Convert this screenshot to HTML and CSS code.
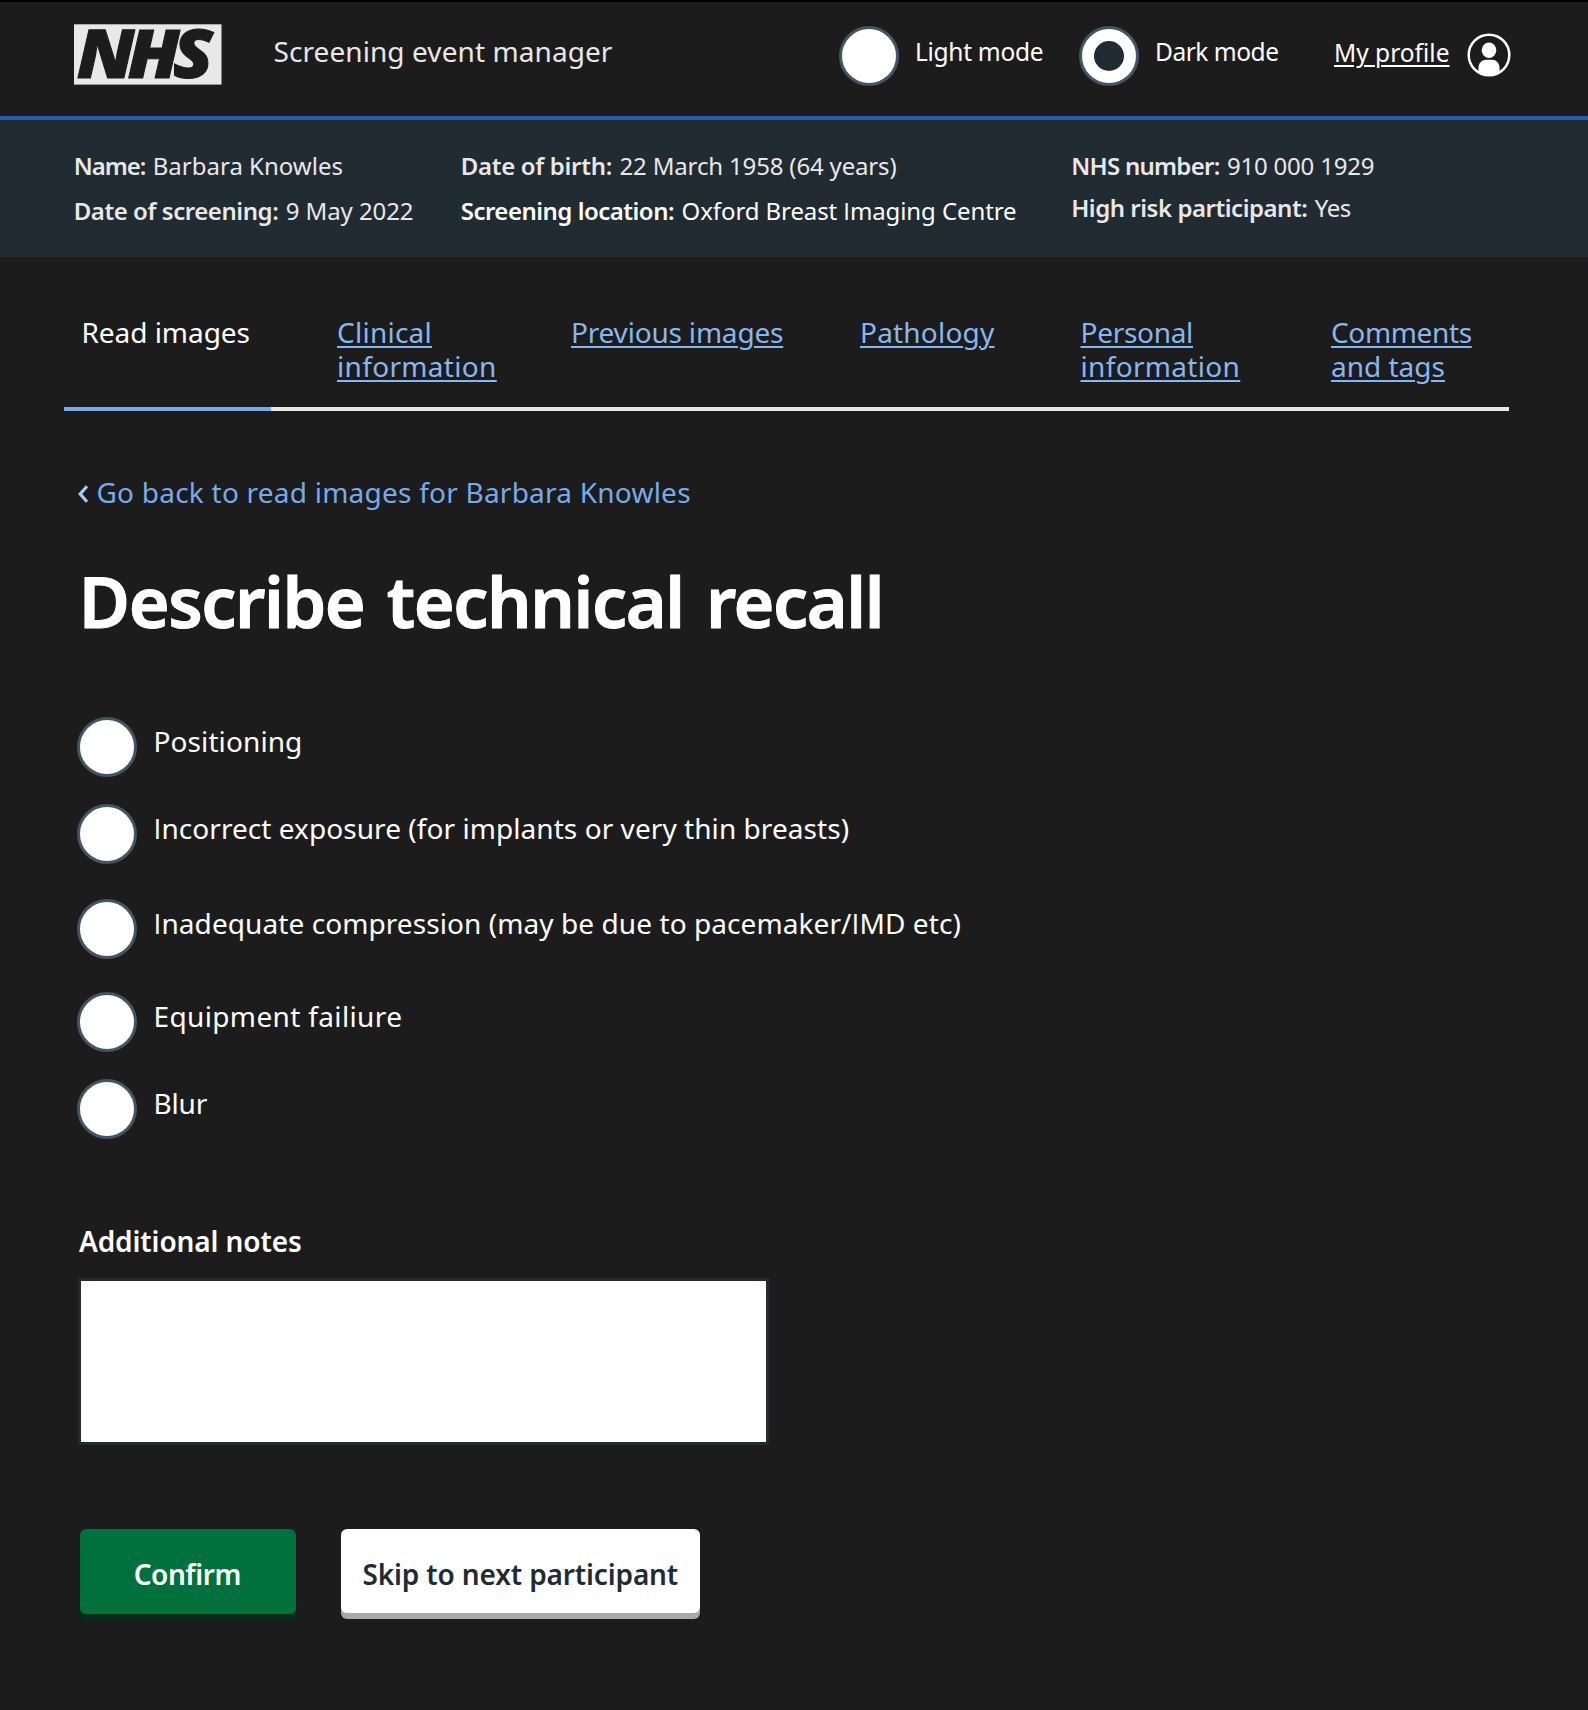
FILE: index.html
```html
<!DOCTYPE html>
<html lang="en">
<head>
<meta charset="utf-8">
<title>Describe technical recall</title>
<link rel="stylesheet" href="styles.css">
</head>
<body>
<header class="header">
  <svg class="logo" width="148" height="101" viewBox="0 -20 148 101" role="img" aria-label="NHS">
    <rect y="0.300" width="147.500" height="60.300" fill="#e8e8e8"/>
    <text class="logo-text" y="53.500" transform="scale(1.100 1)"><tspan x="2.600">N</tspan><tspan x="48.600">H</tspan><tspan x="90">S</tspan></text>
  </svg>
  <div class="service">Screening event manager</div>
  <div class="modes">
    <label class="mode"><span class="radio"></span><span class="mode-label mode-light">Light mode</span></label>
    <label class="mode"><span class="radio radio-on"></span><span class="mode-label mode-dark">Dark mode</span></label>
  </div>
  <a class="profile" href="#">My profile</a>
  <svg class="avatar" width="44" height="44" viewBox="0 0 44 44" aria-hidden="true">
    <circle cx="22" cy="22" r="20.300" fill="none" stroke="#fff" stroke-width="2.500"/>
    <ellipse cx="22" cy="17.300" rx="7.300" ry="7.800" fill="#fff"/>
    <path d="M11.400 38.500V35.500C11.400 30 15.200 26.800 19 26.800H25C28.800 26.800 32.600 30 32.600 35.500V38.500C29.500 41 26 42.400 22 42.400S14.500 41 11.400 38.500Z" fill="#fff"/>
  </svg>
</header>

<dl class="patient">
  <div class="patient-col">
    <div class="field"><dt class="k-name">Name:</dt><dd>Barbara Knowles</dd></div>
    <div class="field"><dt class="k-screened">Date of screening:</dt><dd class="v-screened">9 May 2022</dd></div>
  </div>
  <div class="patient-col">
    <div class="field"><dt class="k-dob">Date of birth:</dt><dd class="v-dob">22 March 1958 (64 years)</dd></div>
    <div class="field field-bright"><dt class="k-place">Screening location:</dt><dd class="v-place">Oxford Breast <span class="cap-i">I</span>maging Centre</dd></div>
  </div>
  <div class="patient-col patient-col-tight">
    <div class="field"><dt class="k-number">NHS number:</dt><dd class="v-number">910 000 1929</dd></div>
    <div class="field"><dt class="k-risk">High risk participant:</dt><dd class="v-risk">Yes</dd></div>
  </div>
</dl>

<nav class="tabs">
  <div class="tab tab-current">Read images</div>
  <div class="tab"><a href="#"><span class="t-clinical">Clinical</span><br><span class="t-wide">information</span></a></div>
  <div class="tab"><a class="t-previous" href="#">Previous images</a></div>
  <div class="tab"><a class="t-pathology" href="#">Pathology</a></div>
  <div class="tab"><a href="#"><span class="t-personal">Personal</span><br><span class="t-wide">information</span></a></div>
  <div class="tab"><a href="#"><span class="t-comments">Comments</span><br>and tags</a></div>
</nav>

<main class="main">
  <a class="back" href="#">
    <svg class="chevron" width="12" height="18" viewBox="0 0 12 18" aria-hidden="true"><path d="M10 1.300L3.200 9L10 16.700" fill="none" stroke="#a3cbf5" stroke-width="3.200"/></svg>
    <span>Go back to read images for Barbara Knowles</span>
  </a>
  <h1 class="title">Describe technical recall</h1>

  <div class="options">
    <label class="option"><span class="radio"></span><span class="o-positioning">Positioning</span></label>
    <label class="option option-2"><span class="radio"></span><span><span class="cap-i">I</span>ncorrect exposure (for implants or very thin breasts)</span></label>
    <label class="option option-3"><span class="radio"></span><span><span class="cap-i">I</span>nadequate compression (may be due to pacemaker/<span class="cap-i">I</span>MD etc)</span></label>
    <label class="option option-4"><span class="radio"></span><span class="o-equipment">Equipment failiure</span></label>
    <label class="option option-5"><span class="radio"></span><span class="o-blur">Blur</span></label>
  </div>

  <label class="notes-label" for="notes">Additional notes</label>
  <textarea class="notes" id="notes"></textarea>

  <div class="actions">
    <button class="button button-confirm">Confirm</button>
    <button class="button button-skip">Skip to next participant</button>
  </div>
</main>
</body>
</html>
```
FILE: styles.css
```css
* { box-sizing: border-box; }

body {
  margin: 0;
  min-height: 1710px;
  background: #1c1c1c;
  color: #fff;
  font: 400 28px/36px "Noto Sans", "Open Sans", sans-serif;
}

a { color: inherit; text-underline-offset: 3px; text-decoration-thickness: 1.5px; }

/* Sans capital I without bars */
.cap-i { font-family: "Open Sans", sans-serif; }

/* Header */
.header {
  display: flex;
  align-items: flex-start;
  height: 120px;
  padding-left: 74px;
  border-top: 2px solid #000;
  border-bottom: 4px solid #255db0;
}
.logo { flex: none; margin-top: 2px; }
.logo-text {
  font: italic 800 66.500px "Open Sans", sans-serif;
  fill: #1c1c1c;
  stroke: #1c1c1c;
  stroke-width: 1px;
}
.service { width: 565px; margin: 31px 0 0 51.500px; color: #e8e8e8; letter-spacing: .08px; white-space: nowrap; }
.modes { display: flex; margin-top: 24px; }
.mode { display: flex; width: 240px; }
.mode-label { margin: 8px 0 0 16.500px; font-size: 24.500px; line-height: 36px; white-space: nowrap; }
.mode-light { letter-spacing: -.3px; }
.mode-dark { letter-spacing: -.48px; }
.radio {
  flex: none;
  width: 60px;
  height: 60px;
  border: 3px solid #425563;
  border-radius: 50%;
  background: #fff;
}
.radio-on { display: grid; place-items: center; }
.radio-on::before { content: ""; width: 30px; height: 30px; border-radius: 50%; background: #212b32; }
.profile { width: 132.500px; margin: 33px 0 0 15.500px; font-size: 24.500px; line-height: 36px; white-space: nowrap; }
.avatar { flex: none; margin-top: 30.500px; }

/* Patient banner */
.patient {
  display: grid;
  grid-template-columns: 387px 610.500px 1fr;
  height: 137px;
  margin: 0;
  padding: 29.500px 0 0 73.700px;
  background: #212b32;
  color: #e8e8e8;
  font-size: 24px;
  line-height: 32px;
}
.patient-col { display: flex; flex-direction: column; gap: 13px; }
.patient-col-tight { gap: 10px; }
.field { display: flex; gap: 7.500px; white-space: nowrap; }
.field-bright { color: #fff; }
dt { font-weight: 600; }
dd { margin: 0; }
.k-name { letter-spacing: -1.040px; }
.k-screened { letter-spacing: -.44px; }
.v-screened { letter-spacing: -.1px; }
.k-dob { letter-spacing: -.3px; }
.v-dob { letter-spacing: -.16px; }
.k-place { letter-spacing: -.5px; }
.v-place { letter-spacing: -.1px; }
.k-number { letter-spacing: -.73px; }
.v-number { letter-spacing: -.22px; }
.k-risk { letter-spacing: -.47px; }
.v-risk { letter-spacing: -.46px; }

/* Tabs */
.tabs {
  position: relative;
  display: grid;
  grid-template-columns: 273px 234px 289px 220.500px 250.500px 1fr;
  width: 1445px;
  height: 154px;
  margin-left: 64px;
  padding-top: 58px;
  border-bottom: 4px solid #e8e8e8;
  line-height: 34px;
  white-space: nowrap;
}
.tab { color: #87b7ed; }
.tab-current { padding-left: 17.500px; color: #fff; letter-spacing: -.05px; }
.tab-current::after {
  content: "";
  position: absolute;
  left: 0;
  bottom: -4px;
  width: 207px;
  height: 4px;
  background: #76abea;
}
.t-clinical { letter-spacing: .25px; }
.t-wide { letter-spacing: .33px; }
.t-previous { letter-spacing: -.19px; }
.t-pathology { letter-spacing: .2px; }
.t-personal { letter-spacing: -.3px; }
.t-comments { letter-spacing: -.36px; }

/* Content */
.main { display: flex; flex-direction: column; align-items: flex-start; padding: 63px 0 0 77px; }
.back { display: flex; align-items: center; gap: 7.500px; color: #76abea; letter-spacing: .23px; text-decoration: none; }
.chevron { margin-top: 4px; }
.title {
  margin: 51px 0 0 1.800px;
  font-size: 70px;
  font-weight: 600;
  line-height: 80px;
  letter-spacing: -1.400px;
  word-spacing: 5.500px;
  -webkit-text-stroke: 1px #fff;
}

.options { margin-top: 76px; }
.option { display: flex; gap: 16.500px; height: 60px; white-space: nowrap; }
.option > :last-child { margin-top: 6px; }
.option-2 { margin-top: 27px; letter-spacing: .06px; }
.option-3 { margin-top: 35px; letter-spacing: .08px; }
.option-4 { margin-top: 33px; }
.option-5 { margin-top: 27px; }
.o-positioning { letter-spacing: .1px; }
.o-equipment { letter-spacing: .36px; }
.o-blur { letter-spacing: -.2px; }

.notes-label { margin: 84px 0 0 2px; font-weight: 600; letter-spacing: -.11px; }
.notes {
  display: block;
  width: 691px;
  height: 167px;
  margin: 19px 0 0 1px;
  border: 3px solid #212b32;
  background: #fff;
  resize: none;
}

.actions { display: flex; gap: 45px; margin: 84px 0 0 3px; }
.button {
  height: 85px;
  padding: 4px 0 0;
  border: 0;
  border-radius: 6px;
  font: 600 28px/36px "Noto Sans", sans-serif;
}
.button-confirm { width: 216px; padding-right: 1.500px; background: #00703c; box-shadow: 0 6px #002f17; color: #fff; letter-spacing: -.45px; }
.button-skip { width: 358.500px; height: 84px; padding-top: 5px; background: #fff; box-shadow: 0 6px #a8a9a9; color: #212b32; letter-spacing: -.14px; }
```
